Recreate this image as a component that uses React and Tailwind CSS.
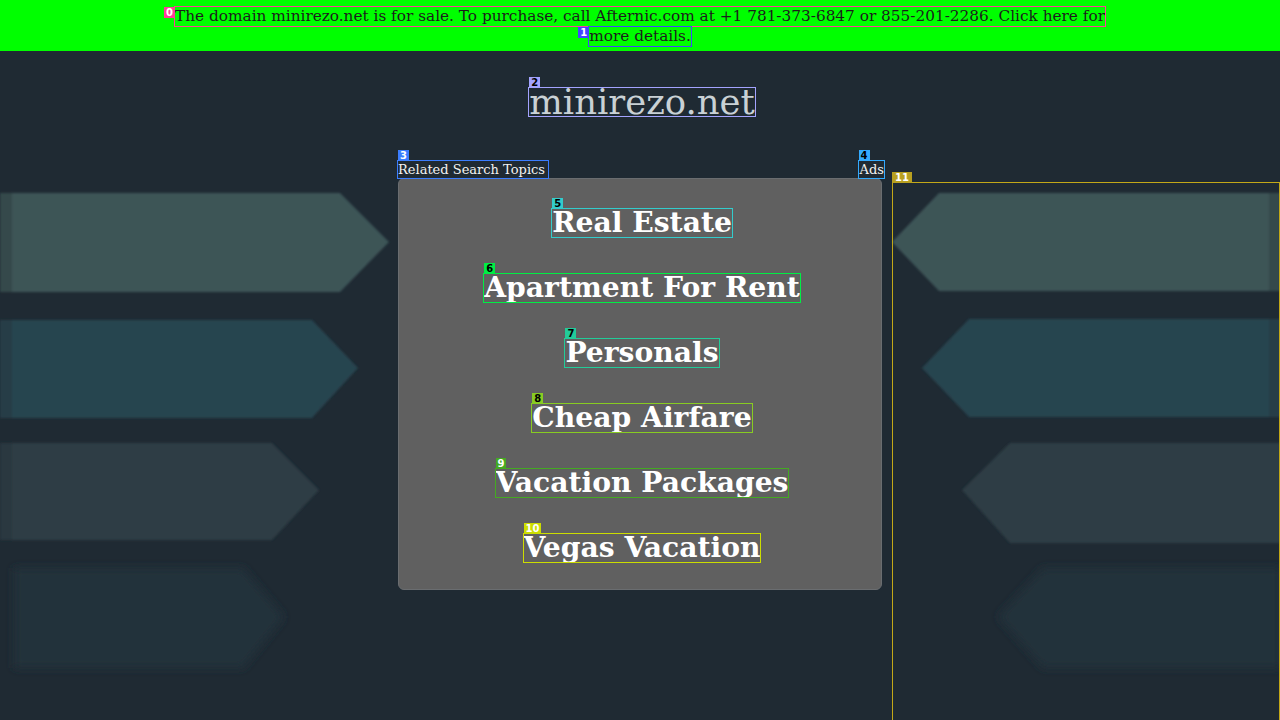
import React from "react";

const serif = { fontFamily: '"DejaVu Serif", "Liberation Serif", serif' };

function Mark({ n, color, textColor = "#000", side = "top", children, className = "" }) {
  return (
    <span className={`relative inline-block ${className}`} style={{ outline: `1px solid ${color}` }}>
      {children}
      <span
        className={`absolute px-[2px] text-[10px] leading-[11px] font-bold ${
          side === "top" ? "bottom-full left-0" : "right-full top-0"
        }`}
        style={{ background: color, color: textColor, fontFamily: '"DejaVu Sans", sans-serif' }}
      >
        {n}
      </span>
    </span>
  );
}

function Background() {
  return (
    <svg className="absolute left-0 top-0 h-[720px] w-[1280px]" width="1280" height="720" viewBox="0 0 1280 720" aria-hidden="true">
      <defs>
        <filter id="b" x="-10%" y="-10%" width="120%" height="120%">
          <feGaussianBlur stdDeviation="1.2" />
        </filter>
        <filter id="b2" x="-10%" y="-10%" width="120%" height="120%">
          <feGaussianBlur stdDeviation="4" />
        </filter>
      </defs>
      <g filter="url(#b)">
        <polygon points="0,193 340,193 389,242 340,292 0,292" fill="#3c5457" />
        <rect x="0" y="193" width="12" height="99" fill="#34494c" />
        <polygon points="0,320 312,320 358,368 312,418 0,418" fill="#28444f" />
        <rect x="0" y="320" width="12" height="98" fill="#253c46" />
        <polygon points="0,443 272,443 319,490 272,540 0,540" fill="#2d3d45" />
        <rect x="0" y="443" width="12" height="97" fill="#293840" />
        <polygon points="1280,193 939,193 892,242 939,291 1280,291" fill="#3c5457" />
        <rect x="1269" y="193" width="11" height="98" fill="#34494c" />
        <polygon points="1280,319 969,319 922,368 969,417 1280,417" fill="#28444f" />
        <rect x="1269" y="319" width="11" height="98" fill="#253c46" />
        <polygon points="1280,443 1010,443 962,490 1010,543 1280,543" fill="#2d3d45" />
      </g>
      <g filter="url(#b2)">
        <polygon points="14,568 243,568 284,617 243,668 14,668" fill="#22303b" />
        <polygon points="1280,568 1043,568 998,617 1043,668 1280,668" fill="#22303b" />
      </g>
    </svg>
  );
}

const topics = ["Real Estate", "Apartment For Rent", "Personals", "Cheap Airfare", "Vacation Packages", "Vegas Vacation"];
const topicColors = [
  ["#33cccc", "#000"],
  ["#00ee44", "#000"],
  ["#22cc99", "#000"],
  ["#88cc22", "#000"],
  ["#44aa22", "#fff"],
  ["#ccdd00", "#fff"],
];

export default function App() {
  return (
    <div className="relative h-[720px] w-full overflow-hidden bg-[#1f2a33]" style={serif}>
      <Background />
      <div className="relative">
        <div className="flex h-[51px] flex-col items-center bg-[#00ff00] pt-[7px] text-[15.3px] leading-[19px] text-[#1c1c1c]">
          <Mark n="0" color="#ff3d9a" textColor="#fff" side="left">
            The domain minirezo.net is for sale. To purchase, call Afternic.com at +1 781-373-6847 or 855-201-2286. Click here for
          </Mark>
          <div className="mt-[1px]">
            <Mark n="1" color="#4444ff" textColor="#fff" side="left">
              <a className="cursor-pointer">more details.</a>
            </Mark>
          </div>
        </div>

        <div className="mt-[37px] flex justify-center pl-[4px]">
          <Mark n="2" color="#a3a3ff" textColor="#000">
            <span className="block text-[35.4px] leading-[28px] text-[#c9d1d5]">minirezo.net</span>
          </Mark>
        </div>

        <div className="mt-[45px] flex">
          <div className="ml-[398px] w-[484px]">
            <div className="flex items-end justify-between text-[13px] leading-[17px] text-[#f2f2f2]">
              <Mark n="3" color="#3b7dff" textColor="#fff">
                <span className="pr-[3px]">Related Search Topics</span>
              </Mark>
              <Mark n="4" color="#33aaff" textColor="#000" className="-mr-[2px]">
                <span className="pl-[1px]">Ads</span>
              </Mark>
            </div>
            <div className="flex h-[412px] flex-col rounded-[6px] border border-[#6a6d70] bg-[#606060] pl-[4px] pt-[11px]">
              {topics.map((t, i) => (
                <div key={t} className="flex h-[65px] items-center justify-center">
                  <Mark n={String(5 + i)} color={topicColors[i][0]} textColor={topicColors[i][1]}>
                    <a className="block cursor-pointer text-[28.2px] font-bold leading-[28px] text-white">{t}</a>
                  </Mark>
                </div>
              ))}
            </div>
          </div>
          <div className="relative ml-[10px] mt-[21px] h-[560px] flex-1 border border-[#c2a818]">
            <span
              className="absolute bottom-full left-[-1px] px-[3px] text-[10px] font-bold leading-[11px] text-white"
              style={{ background: "#b8a020", fontFamily: '"DejaVu Sans", sans-serif' }}
            >
              11
            </span>
          </div>
        </div>
      </div>
    </div>
  );
}
